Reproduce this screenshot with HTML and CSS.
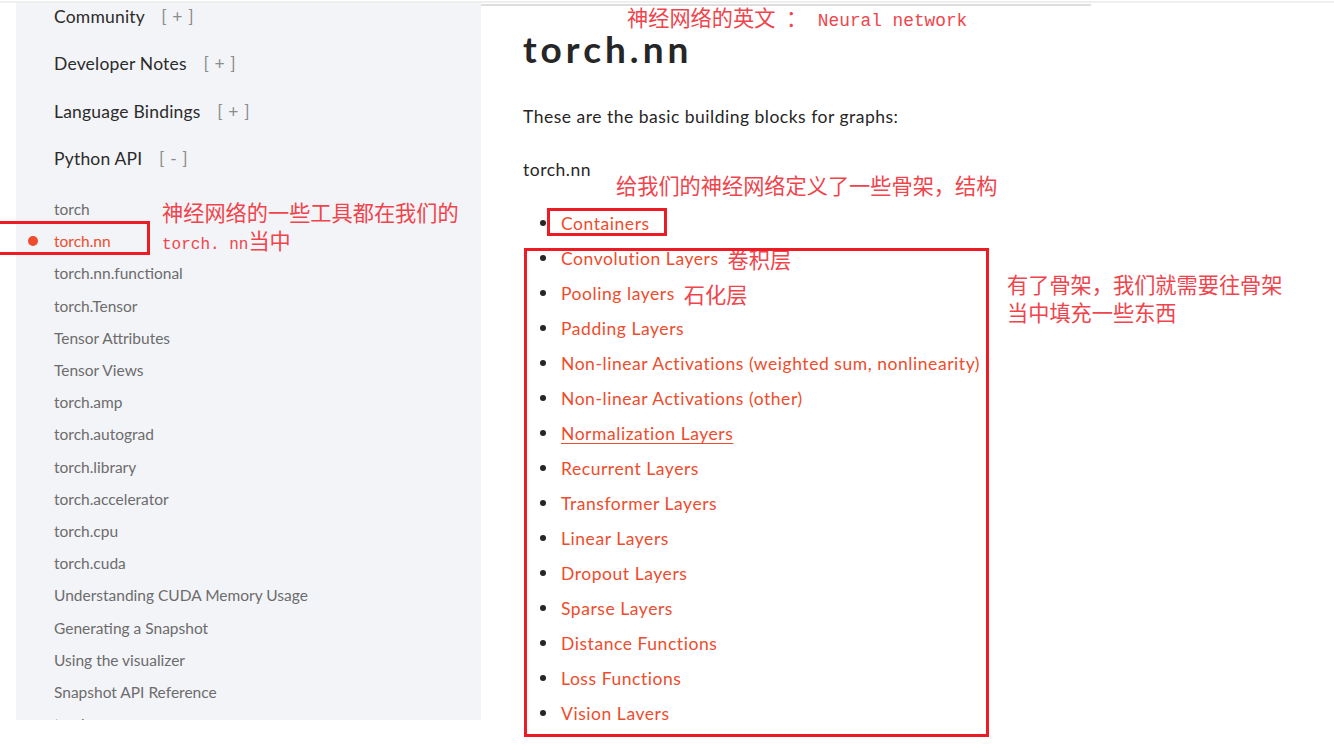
FILE: index.html
```html
<!DOCTYPE html>
<html lang="zh-CN">
<head>
<meta charset="utf-8">
<title>torch.nn</title>
<link rel="stylesheet" href="styles.css">
</head>
<body>
<div class="topline"></div>
<div class="page">
  <aside class="sidebar">
    <div class="section">Community <span class="toggle">[ + ]</span></div>
    <div class="section">Developer Notes <span class="toggle">[ + ]</span></div>
    <div class="section">Language Bindings <span class="toggle">[ + ]</span></div>
    <div class="section section-open">Python API <span class="toggle">[ - ]</span></div>
    <ul class="subnav">
      <li>torch</li>
      <li class="active">torch.nn</li>
      <li>torch.nn.functional</li>
      <li>torch.Tensor</li>
      <li>Tensor Attributes</li>
      <li>Tensor Views</li>
      <li>torch.amp</li>
      <li>torch.autograd</li>
      <li>torch.library</li>
      <li>torch.accelerator</li>
      <li>torch.cpu</li>
      <li>torch.cuda</li>
      <li>Understanding CUDA Memory Usage</li>
      <li>Generating a Snapshot</li>
      <li>Using the visualizer</li>
      <li>Snapshot API Reference</li>
      <li>torch.mps</li>
    </ul>
  </aside>
  <main class="content">
    <div class="content-rule"></div>
    <article class="article">
      <h1 class="title">torch.nn</h1>
      <p class="lead">These are the basic building blocks for graphs:</p>
      <p class="module">torch.nn</p>
      <ul class="toc">
        <li><a>Containers</a></li>
        <li><a>Convolution Layers</a><span class="note-inline">卷积层</span></li>
        <li><a>Pooling layers</a><span class="note-inline">石化层</span></li>
        <li><a>Padding Layers</a></li>
        <li><a>Non-linear Activations (weighted sum, nonlinearity)</a></li>
        <li><a>Non-linear Activations (other)</a></li>
        <li><a class="hover">Normalization Layers</a></li>
        <li><a>Recurrent Layers</a></li>
        <li><a>Transformer Layers</a></li>
        <li><a>Linear Layers</a></li>
        <li><a>Dropout Layers</a></li>
        <li><a>Sparse Layers</a></li>
        <li><a>Distance Functions</a></li>
        <li><a>Loss Functions</a></li>
        <li><a>Vision Lavers</a></li>
      </ul>
    </article>
  </main>

  <div class="note note-title">神经网络的英文<span class="mono"> </span>：<span class="mono"> Neural network</span></div>
  <div class="note note-skeleton">给我们的神经网络定义了一些骨架，结构</div>
  <div class="note note-tools">神经网络的一些工具都在我们的<br><span class="mono mono-small">torch. nn</span>当中</div>
  <div class="note note-fill">有了骨架，我们就需要往骨架<br>当中填充一些东西</div>

  <div class="box box-nav"></div>
  <div class="box box-containers"></div>
  <div class="box box-layers"></div>
</div>
</body>
</html>
```
FILE: styles.css
```css
html, body {
  margin: 0;
  padding: 0;
  background: #ffffff;
  overflow: hidden;
}

body {
  width: 1334px;
  height: 756px;
  font-family: Lato, "Open Sans", "Liberation Sans", sans-serif;
}

.topline {
  margin-top: 1px;
  height: 2px;
  background: #efefef;
}

.page {
  position: relative;
  display: flex;
  align-items: flex-start;
  padding-left: 16px;
  height: 753px;
}

/* ---------- sidebar ---------- */
.sidebar {
  width: 465px;
  height: 717px;
  flex: none;
  background: #f3f4f7;
  overflow: hidden;
  box-sizing: border-box;
  padding: 2px 0 0 38px;
}

.section {
  font-size: 17.5px;
  line-height: 24px;
  color: #2b2b2b;
  letter-spacing: 0.2px;
  margin-bottom: 23.33px;
}

.section-open {
  margin-bottom: 22px;
}

.toggle {
  color: #8c8c8c;
  margin-left: 12px;
  letter-spacing: 0.6px;
}

.subnav {
  list-style: none;
  margin: 0;
  padding: 0;
}

.subnav li {
  font-size: 15.5px;
  line-height: 32.2px;
  color: #6c6c6d;
  white-space: nowrap;
}

.subnav li.active {
  display: flex;
  align-items: center;
  margin-left: -26px;
  color: #ee4c2c;
}

.subnav li.active::before {
  content: "";
  width: 10px;
  height: 10px;
  border-radius: 50%;
  background: #ee4c2c;
  margin-right: 16px;
}

/* ---------- content ---------- */
.content {
  flex: 1;
  min-width: 0;
}

.content-rule {
  width: 610px;
  height: 2px;
  margin-top: 1px;
  background: #dedede;
}

.article {
  padding-left: 42px;
}

.title {
  margin: 21px 0 0;
  font-size: 37px;
  line-height: 44px;
  font-weight: 700;
  letter-spacing: 4px;
  color: #262626;
}

.lead {
  margin: 34px 0 0;
  font-size: 17.5px;
  line-height: 24px;
  letter-spacing: 0.5px;
  color: #262626;
}

.module {
  margin: 29px 0 0;
  font-size: 17.5px;
  line-height: 24px;
  letter-spacing: 0.5px;
  color: #262626;
}

.toc {
  list-style: none;
  margin: 23.5px 0 0 17px;
  padding: 0;
}

.toc li {
  display: flex;
  align-items: center;
  height: 35px;
  font-size: 17.5px;
  letter-spacing: 0.55px;
  white-space: nowrap;
}

.toc li::before {
  content: "";
  width: 6px;
  height: 6px;
  border-radius: 50%;
  background: #262626;
  margin-right: 15px;
  flex: none;
}

.toc a {
  color: #ee4c2c;
  text-decoration: none;
}

.toc a.hover {
  text-decoration: underline;
  text-underline-offset: 3px;
  text-decoration-thickness: 1px;
}

/* ---------- annotations ---------- */
.note {
  position: absolute;
  font-family: "Noto Sans CJK SC", sans-serif;
  font-size: 21.2px;
  line-height: 24px;
  color: #f0444c;
  white-space: nowrap;
}

.note-inline {
  font-family: "Noto Sans CJK SC", sans-serif;
  font-size: 21.2px;
  letter-spacing: 0;
  color: #f0444c;
  margin-left: 9px;
}

.mono {
  font-family: "Liberation Mono", monospace;
  font-size: 17.8px;
}

.mono-small {
  font-size: 16px;
}

.note-title {
  left: 627px;
  top: 2px;
}

.note-skeleton {
  left: 616px;
  top: 170px;
}

.note-tools {
  left: 162px;
  top: 195px;
  line-height: 28px;
}

.note-fill {
  left: 1007px;
  top: 267px;
  line-height: 28px;
}

.box {
  position: absolute;
  border: 3px solid #ed1c24;
  box-sizing: border-box;
}

.box-nav {
  left: -4px;
  top: 218px;
  width: 154px;
  height: 34px;
}

.box-containers {
  left: 547px;
  top: 205px;
  width: 120px;
  height: 28px;
}

.box-layers {
  left: 524px;
  top: 245px;
  width: 465px;
  height: 489px;
}
```
